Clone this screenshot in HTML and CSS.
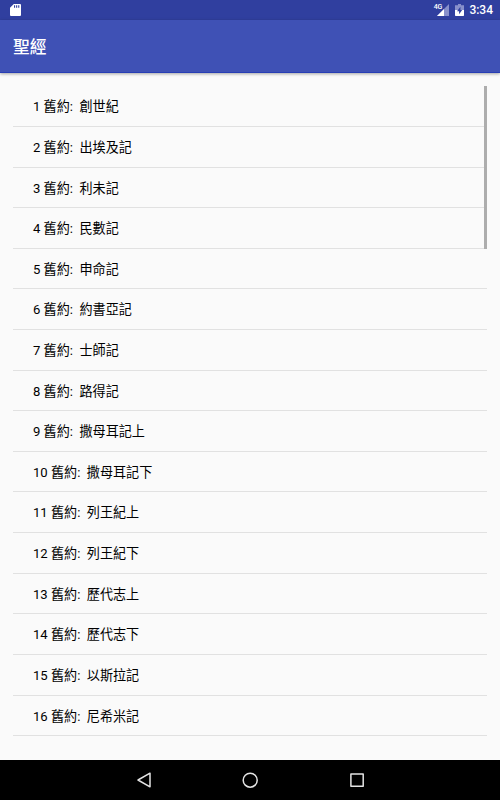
FILE: index.html
```html
<!DOCTYPE html>
<html lang="zh-Hant">
<head>
<meta charset="utf-8">
<title>聖經</title>
<link rel="stylesheet" href="styles.css">
</head>
<body>
<div class="screen">
  <div class="status">
    <svg class="sd" width="11" height="12" viewBox="0 0 11 12"><path fill="#fff" fill-rule="evenodd" d="M3.8 0H10q1 0 1 1v10q0 1-1 1H1q-1 0-1-1V3.8zM4 1.3V3.8h1.1V1.3zM6.1 1.3V3.8h1.1V1.3zM8.2 1.3V3.8h1.1V1.3z"/></svg>
    <div class="indicators">
      <span class="network">4G</span>
      <svg class="signal" width="12" height="12" viewBox="0 0 12 12"><path fill="#8890cb" d="M12 0v12H0z"/><path fill="#fff" d="M7 5v7H0z"/></svg>
      <svg class="battery" width="9" height="12" viewBox="0 0 9 12"><path fill="#8890cb" d="M3 0h3v1.2h3V6H0V1.2h3z"/><path fill="#fff" d="M0 6h9v5.3q0 .7-.7.7H.7Q0 12 0 11.3z"/><path fill="#303f9f" d="M4.1 10.3V7.2H2L5.4 2.8v3.1h1.8z"/></svg>
      <span class="clock">3:34</span>
    </div>
  </div>
  <header class="appbar"><h1>聖經</h1></header>
  <main class="content">
    <ul class="books">
      <li>1 舊約:  創世紀</li>
      <li>2 舊約:  出埃及記</li>
      <li>3 舊約:  利未記</li>
      <li>4 舊約:  民數記</li>
      <li>5 舊約:  申命記</li>
      <li>6 舊約:  約書亞記</li>
      <li>7 舊約:  士師記</li>
      <li>8 舊約:  路得記</li>
      <li>9 舊約:  撒母耳記上</li>
      <li>10 舊約:  撒母耳記下</li>
      <li>11 舊約:  列王紀上</li>
      <li>12 舊約:  列王紀下</li>
      <li>13 舊約:  歷代志上</li>
      <li>14 舊約:  歷代志下</li>
      <li>15 舊約:  以斯拉記</li>
      <li>16 舊約:  尼希米記</li>
    </ul>
    <div class="scrollbar"></div>
  </main>
  <nav class="navbar">
    <svg width="16" height="16" viewBox="0 0 16 16"><path d="M14 1.2v13.6L2 8z"/></svg>
    <svg width="16" height="16" viewBox="0 0 16 16"><circle cx="8.2" cy="8.2" r="7"/></svg>
    <svg width="16" height="16" viewBox="0 0 16 16"><path d="M1.9 1.9h12.3v12.3H1.9z"/></svg>
  </nav>
</div>
</body>
</html>
```
FILE: styles.css
```css
body {
  margin: 0;
  font-family: Roboto, "Noto Sans CJK TC", sans-serif;
}

.screen {
  display: flex;
  flex-direction: column;
  width: 500px;
  height: 800px;
  overflow: hidden;
  background: #fafafa;
}

.status {
  display: flex;
  justify-content: space-between;
  box-sizing: border-box;
  height: 20px;
  padding: 4px 7px 0 10px;
  background: #303f9f;
  color: #fff;
}

.indicators {
  display: flex;
  align-items: flex-start;
}

.network {
  font-size: 7px;
  line-height: 7px;
  font-weight: 500;
  margin-right: -5px;
}

.battery {
  margin: 0 5px 0 6px;
}

.clock {
  font-size: 12px;
  line-height: 13px;
  font-weight: 500;
}

.appbar {
  position: relative;
  display: flex;
  align-items: center;
  box-sizing: border-box;
  height: 53px;
  padding: 3px 0 0 13px;
  background: #3f51b5;
  border-bottom: 1px solid #283eb4;
  box-shadow: 0 1px 3px rgba(0, 0, 0, 0.35);
}

.appbar h1 {
  margin: 0;
  color: #fff;
  font-size: 16.7px;
  line-height: 24px;
  font-weight: 500;
}

.content {
  position: relative;
  flex: 1;
  padding: 13.4px 13px 0;
}

.books {
  margin: 0;
  padding: 0;
  list-style: none;
}

.books li {
  box-sizing: border-box;
  height: 40.62px;
  padding-left: 20px;
  border-bottom: 1px solid #e1e1e1;
  color: #000;
  font-size: 13.1px;
  line-height: 42px;
  white-space: pre;
}

.scrollbar {
  position: absolute;
  top: 13px;
  right: 13px;
  width: 3px;
  height: 163px;
  background: #adadad;
}

.navbar {
  display: flex;
  justify-content: center;
  align-items: center;
  gap: 90.5px;
  height: 40px;
  background: #000;
}

.navbar svg {
  fill: none;
  stroke: #e4e4e4;
  stroke-width: 1.5;
  stroke-linejoin: round;
}
```
